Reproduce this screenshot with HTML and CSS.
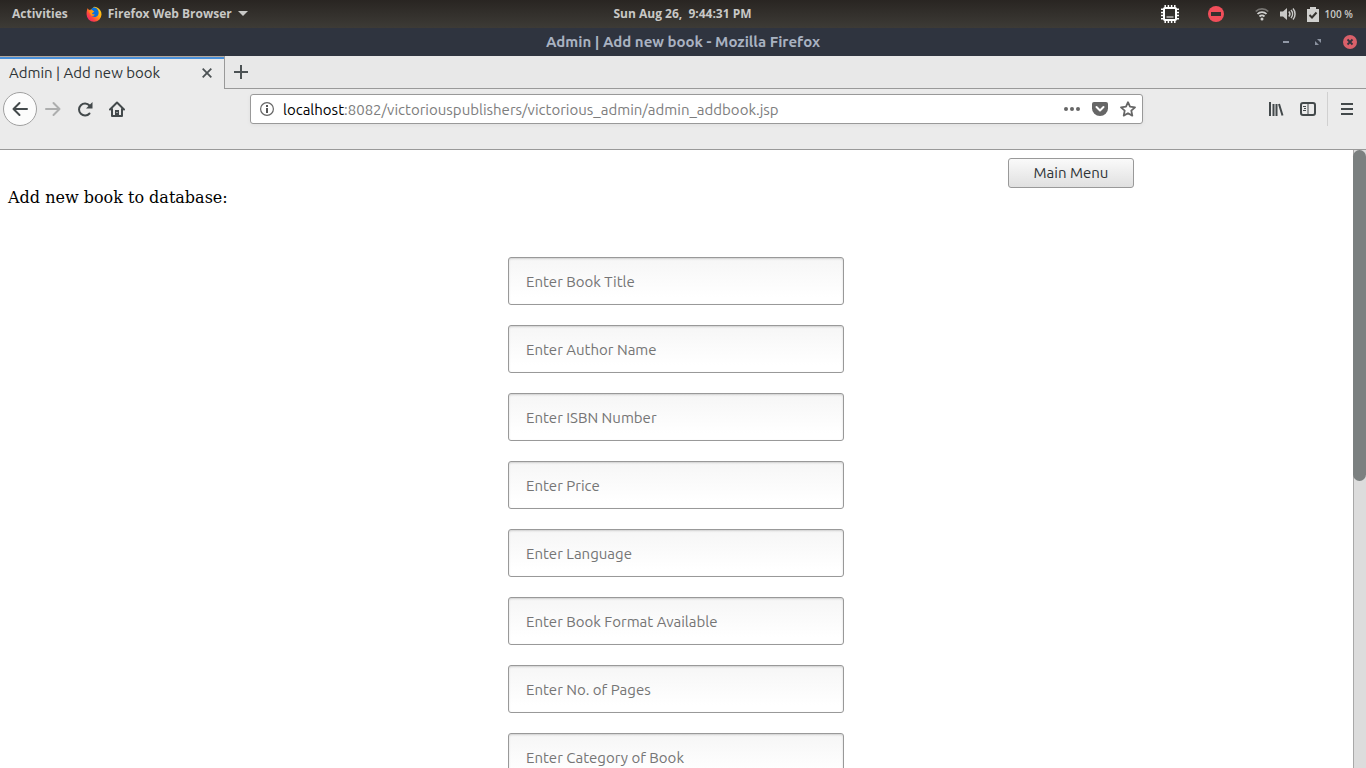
FILE: index.html
```html
<!DOCTYPE html>
<html lang="en">
<head>
<meta charset="utf-8">
<title>Admin | Add new book</title>
<link rel="stylesheet" href="styles.css">
</head>
<body>
<header class="panel">
  <div class="panel-side">
    <button class="panel-item">Activities</button>
    <button class="panel-item app">
      <svg width="16" height="16" viewBox="0 0 16 16" aria-hidden="true">
        <defs><linearGradient id="flame" x1="1" y1="0" x2="0" y2="1"><stop offset="0" stop-color="#ffe226"/><stop offset=".4" stop-color="#ffa40e"/><stop offset=".68" stop-color="#ff4540"/><stop offset="1" stop-color="#e31587"/></linearGradient></defs>
        <path fill="url(#flame)" d="M1.600 2.200 3 4 5.200 3.600 8 .7l1.800.3L11 1.500c3 1.500 4.500 4 4.500 7A7.400 7.400 0 0 1 8 15.800 7.400 7.400 0 0 1 .6 8.500C.5 6 .8 4.200 1.600 2.200z"/>
        <path fill="#0a70d8" d="M5.200 3.200C6.500 1.200 9 1 10.800 2.500c2 1.600 2.400 4.700 1.200 6.700C10.500 11.500 7 11.500 5.500 9.500c1.500.5 2.700 0 3.500-.8L5.500 8l.7-1.500 2-.8z"/>
        <path fill="#ff980e" d="M3 5.200 6 4.600 8.300 5.700 6.400 6.800 6 8.200 8.500 8.700C7.500 10 6 10 5 9.200z"/>
      </svg>
      <span>Firefox Web Browser</span>
      <svg width="10" height="6" viewBox="0 0 10 6" aria-hidden="true"><path fill="#c8c8c6" d="M0 0h10L5 5z"/></svg>
    </button>
  </div>
  <time class="clock">Sun Aug 26,&nbsp; 9:44:31 PM</time>
  <div class="panel-side tray">
    <svg class="chip" width="20" height="20" viewBox="0 0 20 20" aria-hidden="true"><rect x="4" y="4" width="12" height="12" rx="1" fill="none" stroke="#fff" stroke-width="2"/><path stroke="#fff" stroke-width="1.500" d="M5.200 1v3M8.400 1v3M11.600 1v3M14.800 1v3M5.200 16v3M8.400 16v3M11.600 16v3M14.800 16v3M1 5.200h3M1 8.400h3M1 11.600h3M1 14.800h3M16 5.200h3M16 8.400h3M16 11.600h3M16 14.800h3"/><path stroke="#fff" d="M6.500 13h7"/></svg>
    <svg class="stop" width="16" height="16" viewBox="0 0 16 16" aria-hidden="true"><circle cx="8" cy="8" r="8" fill="#f14e5a"/><path fill="#35312f" d="M3 6h10v4H3z"/></svg>
    <svg class="wifi" width="14" height="14" viewBox="0 0 14 14" aria-hidden="true" fill="none" stroke-width="1.800"><path stroke="#777572" d="M.8 4.500C4 1 10 1 13.200 4.500"/><path stroke="#d0d0ce" d="M2.500 7c2.400-2.600 6.600-2.600 9 0M4.500 9.500c1.400-1.400 3.600-1.400 5 0"/><circle cx="7" cy="12" r="1.500" fill="#d0d0ce"/></svg>
    <svg class="sound" width="16" height="14" viewBox="0 0 16 14" aria-hidden="true"><path fill="#c8c8c6" d="M0 4.500h3L7 1v12L3 9.500H0z"/><path fill="none" stroke="#c8c8c6" stroke-width="1.500" d="M8.800 4.500c1.300 1.400 1.300 3.600 0 5M11 3c2 2.300 2 5.700 0 8M13 1.500c2.700 3 2.700 8 0 11"/></svg>
    <svg class="battery" width="12" height="15" viewBox="0 0 12 15" aria-hidden="true"><path fill="#d0d0ce" d="M3 0h6v2h3v13H0V2h3z"/><path fill="none" stroke="#35332f" stroke-width="2" d="m2.500 8 2.500 2.500 4.500-5"/></svg>
    <span class="percent">100 %</span>
  </div>
</header>

<div class="titlebar">
  <span class="window-title">Admin | Add new book - Mozilla Firefox</span>
  <div class="window-buttons">
    <button aria-label="Minimize"><svg width="8" height="8" viewBox="0 0 8 8"><path fill="#9299a7" d="M1 3h6v2H1z"/></svg></button>
    <button aria-label="Restore"><svg width="8" height="8" viewBox="0 0 8 8"><path fill="#8b92a0" d="M3 1h4v4zM1 3l4 4H1z"/></svg></button>
    <button class="close" aria-label="Close"><svg width="14" height="14" viewBox="0 0 14 14"><circle cx="7" cy="7" r="7" fill="#d9606a"/><path stroke="#2f343f" stroke-width="1.800" d="m4.500 4.500 5 5m0-5-5 5"/></svg></button>
  </div>
</div>

<div class="tabs">
  <div class="tab">
    <span>Admin | Add new book</span>
    <button aria-label="Close tab"><svg width="10" height="10" viewBox="0 0 10 10"><path stroke="#4c5254" stroke-width="1.800" d="m.7.7 8.600 8.600m0-8.600L.7 9.300"/></svg></button>
  </div>
  <div class="tab-rest">
    <button aria-label="New tab"><svg width="14" height="14" viewBox="0 0 14 14"><path stroke="#4c5254" stroke-width="2" d="M7 0v14M0 7h14"/></svg></button>
  </div>
</div>

<nav class="toolbar">
  <div class="nav-buttons">
    <button class="back" aria-label="Back"><svg width="16" height="16" viewBox="0 0 16 16"><path fill="none" stroke="#43494b" stroke-width="2" stroke-linecap="round" stroke-linejoin="round" d="M15 8H1.500M7.500 2l-6 6 6 6"/></svg></button>
    <button aria-label="Forward"><svg width="16" height="16" viewBox="0 0 16 16"><path fill="none" stroke="#adaeae" stroke-width="2" stroke-linecap="round" stroke-linejoin="round" d="M1 8h13.500M8.500 2l6 6-6 6"/></svg></button>
    <button aria-label="Reload"><svg width="16" height="16" viewBox="0 0 16 16"><path fill="none" stroke="#43494b" stroke-width="2" stroke-linecap="round" d="M12.500 4.500A6 6 0 1 0 12.500 12.500"/><path fill="#43494b" d="M15.500 1v6.500H9z"/></svg></button>
    <button aria-label="Home"><svg width="16" height="16" viewBox="0 0 16 16"><path fill="none" stroke="#43494b" stroke-width="2" stroke-linecap="round" stroke-linejoin="round" d="M1 8.500 8 1.500l7 7M3 8v7h10V8"/><path fill="#43494b" d="M6 9h4v6H6z"/><path fill="#ebebeb" d="M7.500 11h1v1h-1z"/></svg></button>
  </div>
  <div class="address">
    <svg width="14" height="14" viewBox="0 0 14 14" aria-hidden="true"><circle cx="7" cy="7" r="6.400" fill="none" stroke="#666" stroke-width="1.200"/><path fill="#555" d="M6 3h2v2H6zM6 6h2v5H6z"/></svg>
    <a class="url" href="#"><b>localhost</b>:8082/victoriouspublishers/victorious_admin/admin_addbook.jsp</a>
    <button aria-label="Page actions"><svg width="16" height="16" viewBox="0 0 16 16" fill="#666"><circle cx="2" cy="8" r="2"/><circle cx="8" cy="8" r="2"/><circle cx="14" cy="8" r="2"/></svg></button>
    <button aria-label="Save to Pocket"><svg width="16" height="16" viewBox="0 0 16 16"><path fill="#666" d="M2 1h12a2 2 0 0 1 2 2v4.500a8 7.500 0 0 1-16 0V3a2 2 0 0 1 2-2z"/><path fill="none" stroke="#fff" stroke-width="2" stroke-linecap="round" stroke-linejoin="round" d="m4.500 6 3.500 3.500L11.500 6"/></svg></button>
    <button aria-label="Bookmark"><svg width="16" height="16" viewBox="0 0 16 16"><path fill="none" stroke="#666" stroke-width="1.800" stroke-linejoin="round" d="m8 1.200 2 4.500 5 .6-3.700 3.300 1 5L8 12.200l-4.300 2.400 1-5L1 6.300l5-.6z"/></svg></button>
  </div>
  <div class="tools">
    <button aria-label="Library"><svg width="16" height="16" viewBox="0 0 16 16"><path stroke="#43494b" stroke-width="2" d="M2 1v14M5.500 3v12M8.500 3v12M11 3l3.500 11.500"/></svg></button>
    <button aria-label="Sidebars"><svg width="16" height="16" viewBox="0 0 16 16"><rect x="1" y="2" width="14" height="12" rx="2" fill="none" stroke="#43494b" stroke-width="2"/><path fill="none" stroke="#43494b" d="M8 2v12M3 5.500h3M4 7.500h2M3 9.500h3"/></svg></button>
    <button class="menu" aria-label="Menu"><svg width="12" height="12" viewBox="0 0 12 12"><path fill="#43494b" d="M0 0h12v2H0zM0 5h12v2H0zM0 10h12v2H0z"/></svg></button>
  </div>
</nav>

<div class="viewport">
  <main class="page">
    <div class="actions"><button class="main-menu">Main Menu</button></div>
    <p class="intro">Add new book to database:</p>
    <form class="book-form">
      <input type="text" aria-label="Book title" placeholder="Enter Book Title">
      <input type="text" aria-label="Author name" placeholder="Enter Author Name">
      <input type="text" aria-label="ISBN number" placeholder="Enter ISBN Number">
      <input type="text" aria-label="Price" placeholder="Enter Price">
      <input type="text" aria-label="Language" placeholder="Enter Language">
      <input type="text" aria-label="Book format available" placeholder="Enter Book Format Available">
      <input type="text" aria-label="Number of pages" placeholder="Enter No. of Pages">
      <input type="text" aria-label="Category of book" placeholder="Enter Category of Book">
    </form>
  </main>
  <div class="scrollbar"><div class="thumb"></div></div>
</div>
</body>
</html>
```
FILE: styles.css
```css
* { box-sizing: border-box; }

body {
  margin: 0;
  height: 100vh;
  display: flex;
  flex-direction: column;
  overflow: hidden;
  background: #fff;
  font: 15px/20px "Ubuntu", "Noto Sans", sans-serif;
}

svg { display: block; flex: none; }

button {
  display: flex;
  align-items: center;
  justify-content: center;
  margin: 0;
  padding: 0;
  border: 0;
  background: none;
  color: inherit;
  font: inherit;
}

/* Desktop panel */
.panel {
  flex: none;
  display: flex;
  align-items: center;
  height: 28px;
  padding: 0 13px 0 12px;
  background: linear-gradient(#292522, #3d3b36);
  color: #c8c8c6;
  font: bold 12px/16px "Open Sans", sans-serif;
}
.panel-side { flex: 1 1 0; display: flex; align-items: center; gap: 18px; }
.panel-item { gap: 6px; }
.tray { justify-content: flex-end; gap: 0; }
.chip { margin-right: 28px; }
.stop { margin-right: 31px; }
.wifi { margin-right: 11px; }
.sound { margin-right: 11px; }
.battery { margin-right: 6px; }
.percent { font-size: 10px; font-weight: 600; }

/* Window title */
.titlebar {
  flex: none;
  display: grid;
  grid-template-columns: 1fr auto 1fr;
  align-items: center;
  height: 28px;
  padding: 0 9px;
  background: #2f343f;
  color: #a9b2c1;
}
.window-title { grid-column: 2; font-weight: bold; }
.window-buttons { display: flex; justify-content: flex-end; align-items: center; gap: 24px; }
.window-buttons .close { margin-left: -3px; }

/* Tabs */
.tabs { flex: none; display: flex; height: 33px; background: #e8e8e8; color: #2e3436; }
.tab {
  display: flex;
  align-items: center;
  justify-content: space-between;
  width: 224px;
  padding: 0 12px 0 9px;
  border-top: 1px solid #b5a99e;
  box-shadow: inset 0 2px #4a90d9;
  background: #ebebeb;
}
.tab-rest {
  flex: 1;
  display: flex;
  align-items: center;
  padding-left: 9px;
  border-left: 1px solid #999;
  border-bottom: 1px solid #999;
}

/* Navigation toolbar */
.toolbar {
  flex: none;
  display: flex;
  align-items: flex-start;
  height: 61px;
  padding: 3px 13px 0 3px;
  border-bottom: 1px solid #999;
  background: #ebebeb;
}
.nav-buttons { display: flex; align-items: center; gap: 16px; width: 247px; height: 34px; }
.back { width: 34px; height: 34px; margin-right: -8px; border: 1px solid #a0a0a0; border-radius: 50%; background: #fcfcfc; }
.address {
  flex: 1;
  display: flex;
  align-items: center;
  gap: 12px;
  height: 30px;
  margin-top: 2px;
  padding: 0 6px 0 9px;
  border: 1px solid #999;
  border-radius: 3px;
  background: #fff;
  box-shadow: 0 1px 4px rgba(0, 0, 0, .05);
}
.url { flex: 1; margin-left: -3px; padding-top: 1px; color: #7d7d7d; text-decoration: none; white-space: nowrap; }
.url b { color: #000; font-weight: normal; }
.tools { display: flex; align-items: center; gap: 16px; height: 34px; margin-left: 125px; }
.menu { height: 34px; margin-left: -5px; padding-left: 13px; border-left: 1px solid #d0d0d0; }

/* Page content */
.viewport { flex: 1; display: flex; min-height: 0; }
.page { flex: 1; padding: 8px; overflow: hidden; }
.actions { display: flex; justify-content: flex-end; padding-right: 211px; }
.main-menu {
  width: 126px;
  height: 30px;
  border: 1px solid #999;
  border-radius: 3px;
  background: linear-gradient(#fafafa, #e0e0e0);
  color: #2e3436;
}
.intro { margin: 0 0 50px; font: 16px/19px "DejaVu Serif", serif; }
.book-form { display: flex; flex-direction: column; align-items: center; gap: 20px; padding-right: 1px; }
.book-form input {
  flex: none;
  width: 336px;
  height: 48px;
  padding: 0 17px;
  border: 1px solid #999;
  border-radius: 3px;
  background: linear-gradient(#f6f6f6, #fff 85%);
  box-shadow: inset 0 1px 2px rgba(0, 0, 0, .16);
  font: inherit;
}
.book-form input::placeholder { color: #757575; opacity: 1; }

.scrollbar { flex: none; width: 13px; border-left: 1px solid #a8a8a8; background: #dcdcdc; }
.thumb { height: 331px; margin-left: -1px; border-radius: 7px; background: #7b8080; }
```
